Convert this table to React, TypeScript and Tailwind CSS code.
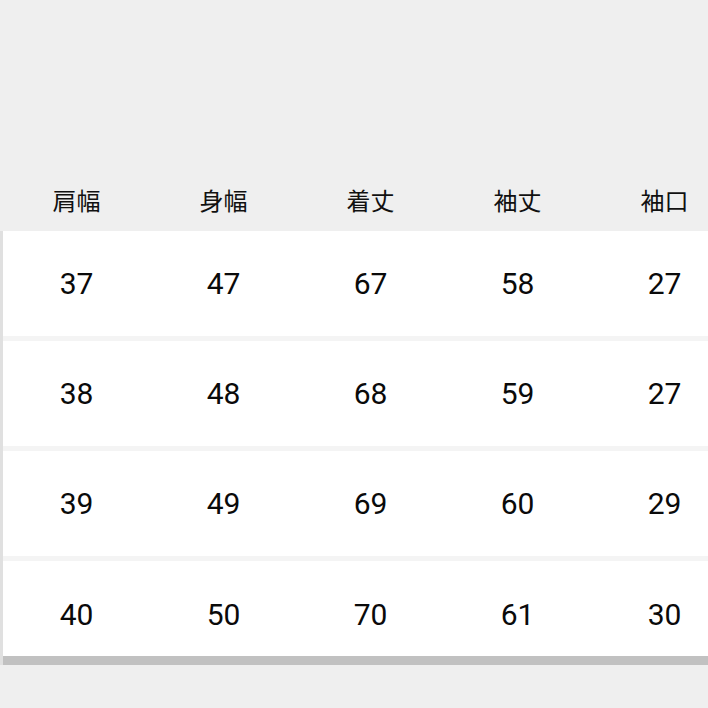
const HEADERS = ['肩幅', '身幅', '着丈', '袖丈', '袖口'];

const ROWS = [
  [37, 47, 67, 58, 27],
  [38, 48, 68, 59, 27],
  [39, 49, 69, 60, 29],
  [40, 50, 70, 61, 30],
];

export default function App() {
  return (
    <div className="w-[708px] h-[708px] overflow-hidden bg-[#efefef]">
      <div className="h-[231px] pl-[3px] pb-[13px] flex items-end">
        {HEADERS.map((h) => (
          <div
            key={h}
            className="w-[147px] shrink-0 text-center text-[24px] leading-[36px] text-[#111]"
            style={{ fontFamily: '"Noto Sans CJK JP", "Noto Sans", sans-serif' }}
          >
            {h}
          </div>
        ))}
      </div>
      <div className="border-l-[3px] border-[#e0e0e0] bg-[#f4f4f4] flex flex-col gap-[5px]">
        {ROWS.map((row, i) => {
          const last = i === ROWS.length - 1;
          return (
            <div
              key={i}
              className={
                last
                  ? 'flex items-center bg-white h-[84px] pt-[11px] border-b-[9px] border-[#c1c1c1] box-content'
                  : 'flex items-center bg-white h-[105px]'
              }
            >
              {row.map((v, j) => (
                <div
                  key={j}
                  className="w-[147px] shrink-0 text-center text-[30px] text-[#0a0a0a]"
                  style={{ fontFamily: 'Roboto, "Liberation Sans", sans-serif' }}
                >
                  {v}
                </div>
              ))}
            </div>
          );
        })}
      </div>
    </div>
  );
}
